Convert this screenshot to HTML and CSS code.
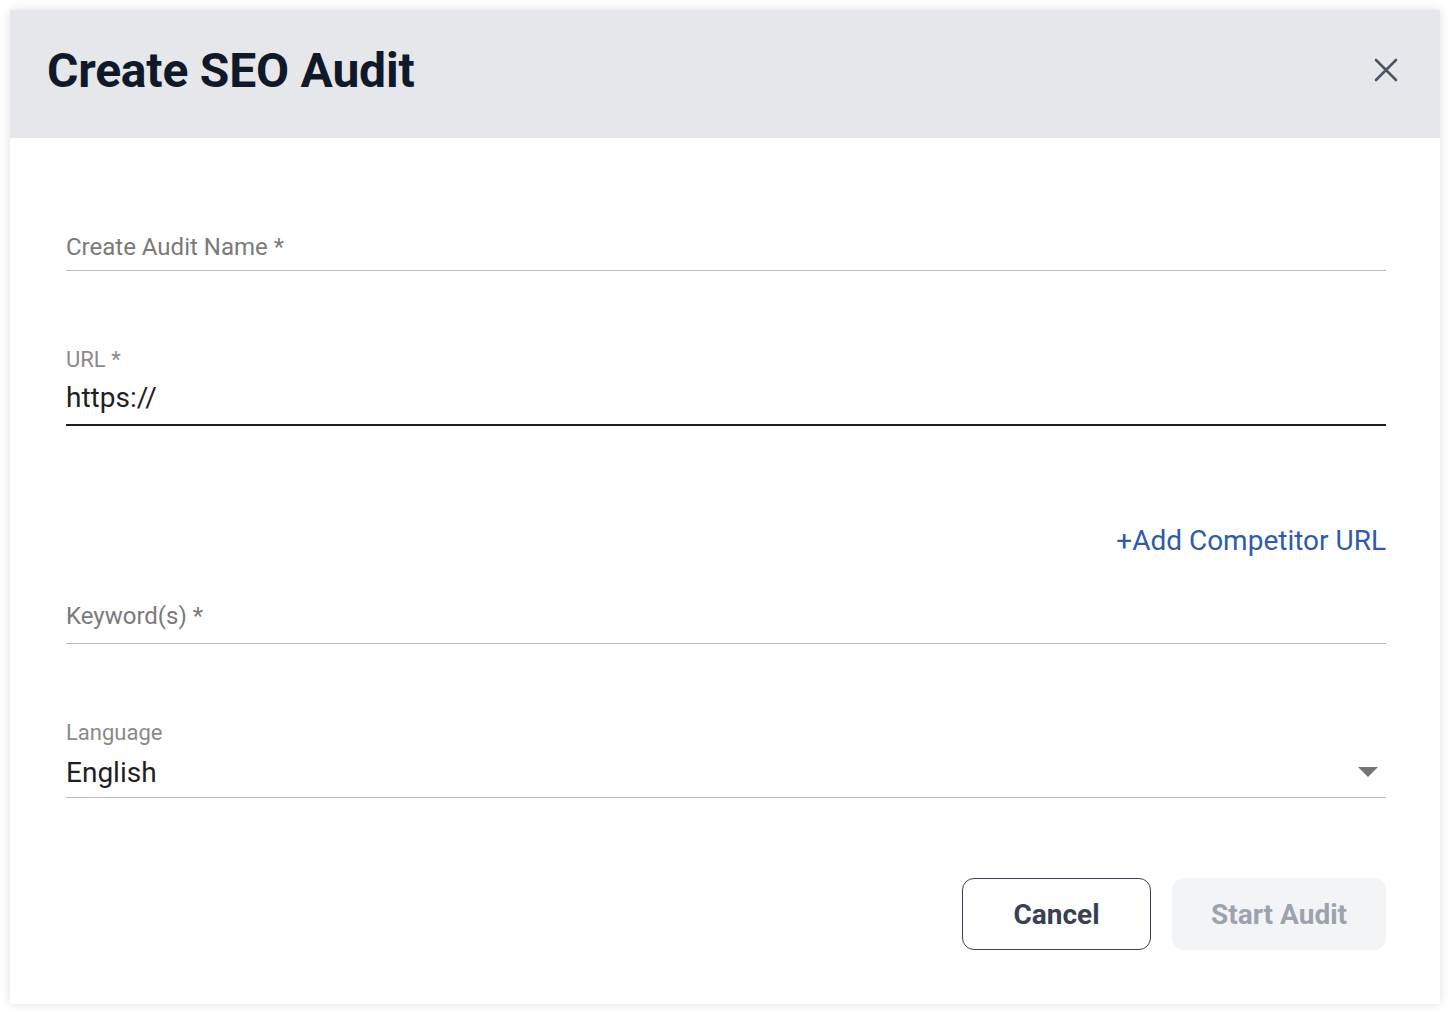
FILE: index.html
```html
<!DOCTYPE html>
<html lang="en">
<head>
<meta charset="utf-8">
<title>Create SEO Audit</title>
<link rel="stylesheet" href="styles.css">
</head>
<body>
<div class="dialog">
  <div class="dialog-header">
    <h1 class="dialog-title">Create SEO Audit</h1>
    <button class="close-btn" aria-label="Close">
      <svg width="24" height="24" viewBox="0 0 24 24"><path d="M2 2L22 22M22 2L2 22" stroke="#4b5563" stroke-width="2.6" stroke-linecap="round" fill="none"/></svg>
    </button>
  </div>
  <div class="dialog-body">
    <div class="field field-first">
      <div class="field-label"></div>
      <div class="field-input placeholder">Create Audit Name *</div>
    </div>
    <div class="field field-active">
      <div class="field-label">URL *</div>
      <div class="field-input">https://</div>
    </div>
    <div class="add-row"><a class="add-link">+Add Competitor URL</a></div>
    <div class="field field-keyword">
      <div class="field-label"></div>
      <div class="field-input placeholder placeholder-kw">Keyword(s) *</div>
    </div>
    <div class="field field-lang">
      <div class="field-label">Language</div>
      <div class="field-input select"><span>English</span><span class="caret"></span></div>
    </div>
    <div class="actions">
      <button class="btn btn-cancel">Cancel</button>
      <button class="btn btn-start" disabled>Start Audit</button>
    </div>
  </div>
</div>
</body>
</html>
```
FILE: styles.css
```css
html, body {
  margin: 0;
  padding: 0;
  background: #ffffff;
}
body {
  font-family: Roboto, "Liberation Sans", Arial, sans-serif;
  padding: 10px;
}
.dialog {
  width: 1430px;
  height: 994px;
  background: #ffffff;
  box-shadow: 0 0 10px rgba(0, 0, 0, 0.12);
  display: flex;
  flex-direction: column;
}
.dialog-header {
  height: 128px;
  background: #e5e7eb;
  display: flex;
  align-items: center;
  justify-content: space-between;
  padding: 0 42px 8px 37px;
  box-sizing: border-box;
}
.dialog-title {
  margin: 0;
  font-size: 48px;
  font-weight: 700;
  color: #111827;
  letter-spacing: -0.2px;
  line-height: 1;
  position: relative;
  top: 1px;
}
.close-btn {
  background: none;
  border: none;
  padding: 0;
  width: 24px;
  height: 24px;
  display: flex;
  cursor: pointer;
}
.dialog-body {
  padding: 56px 54px 0 56px;
  display: flex;
  flex-direction: column;
}
.field {
  border-bottom: 1px solid #bdbdbd;
  padding-bottom: 8px;
}
.field + .field {
  margin-top: 77px;
}
.field-active {
  border-bottom: 2px solid #1f1f1f;
}
.field-label {
  height: 24px;
  line-height: 24px;
  font-size: 22px;
  color: #8a8a8a;
  margin-bottom: 8px;
}
.field-input {
  height: 36px;
  line-height: 36px;
  font-size: 28px;
  color: #1f1f1f;
}
.placeholder {
  font-size: 24px;
  color: #7a7a7a;
  padding-top: 3px;
  box-sizing: border-box;
}
.placeholder-kw {
  padding-top: 0;
  line-height: 34px;
}
.select {
  display: flex;
  justify-content: space-between;
  align-items: center;
}
.select span:first-child {
  position: relative;
  top: 2px;
}
.caret {
  width: 0;
  height: 0;
  border-left: 10px solid transparent;
  border-right: 10px solid transparent;
  border-top: 10px solid #757575;
  margin-right: 8px;
  position: relative;
  top: 1px;
}
.add-row {
  margin-top: 97px;
  display: flex;
  justify-content: flex-end;
}
.add-link {
  font-size: 28px;
  line-height: 36px;
  color: #2f5ba8;
  cursor: pointer;
}
.field-keyword {
  margin-top: 8px;
}
.actions {
  margin-top: 80px;
  display: flex;
  justify-content: flex-end;
  gap: 21px;
}
.btn {
  height: 72px;
  border-radius: 12px;
  font-family: Roboto, "Liberation Sans", Arial, sans-serif;
  font-size: 28px;
  font-weight: 700;
  padding: 0;
}
.btn-cancel {
  width: 189px;
  background: #ffffff;
  border: 1px solid #374151;
  color: #374151;
}
.btn-start {
  width: 214px;
  background: #f3f4f6;
  border: none;
  color: #9ca3af;
}
```
